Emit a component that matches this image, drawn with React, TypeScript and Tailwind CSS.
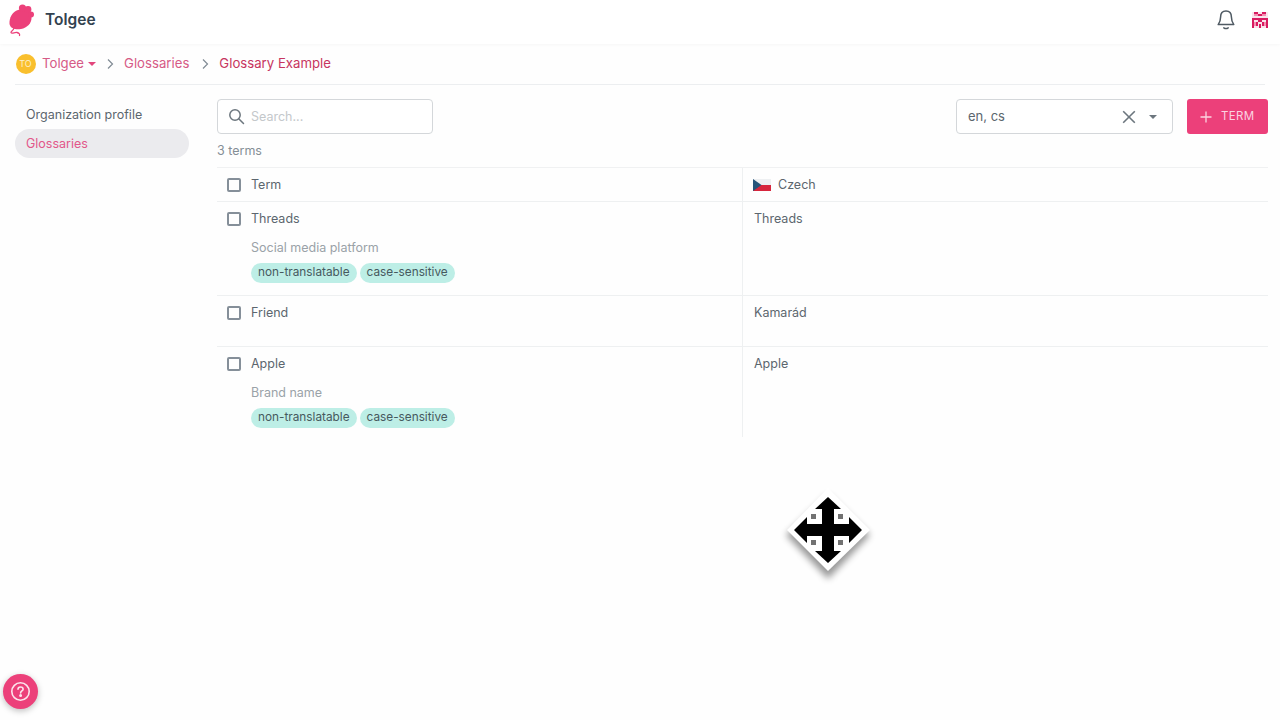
import React from "react";

const ff = "font-['Inter','Liberation_Sans',sans-serif]";

function Mouse() {
  return (
    <svg width="26" height="33" viewBox="9 4 26 33" className="shrink-0">
      <g fill="#ec407a">
        <path d="M9.5 24 C9 18 12.5 11.5 18 10 C24 8.5 31 11 31.5 17 C32 23 27 28 21 29 C16 29.8 10.5 29 9.5 24 Z" />
        <circle cx="22.5" cy="8" r="3.6" />
        <circle cx="28" cy="9.5" r="3.4" />
        <circle cx="31" cy="14.5" r="3" />
      </g>
      <path d="M14 28 C13.5 31 10.5 31 11 32.5 C11.5 34 15 32 17 32.5 C19 33 20 34 19.5 35.5" fill="none" stroke="#ec407a" strokeWidth="1.3" strokeLinecap="round" />
    </svg>
  );
}

function Avatar() {
  return (
    <svg width="16" height="16" viewBox="0 0 8 8" shapeRendering="crispEdges" className="shrink-0">
      <rect width="8" height="8" fill="#f9e4ec" />
      <path fill="#d81b60" d="M1 0h2v1H1zM5 0h2v1H5zM3 1h2v1H3zM0 3h8v1H0zM0 4h1v4H0zM7 4h1v4H7zM3 4h2v1H3zM2 5h1v2H2zM5 5h1v2H5zM3.5 6h1v2h-1z" />
      <path fill="#f48fb1" d="M1 1h2v1H1zM5 1h2v1H5zM1 5h1v2H1zM6 5h1v2H6z" />
    </svg>
  );
}

function Chevron() {
  return (
    <svg width="14" height="14" viewBox="0 0 14 14" fill="none" stroke="#808b94" strokeWidth="1.2" className="shrink-0">
      <path d="M5 2.5 L9.5 7 L5 11.5" />
    </svg>
  );
}

function Caret({ color, w = 8 }: { color: string; w?: number }) {
  return (
    <svg width={w} height={w / 2} viewBox="0 0 8 4" className="shrink-0">
      <path d="M0 0h8L4 4z" fill={color} />
    </svg>
  );
}

function Check() {
  return <div className="h-[14px] w-[14px] shrink-0 rounded-[2px] border-2 border-[#858f99]" />;
}

function Tag({ children }: { children: React.ReactNode }) {
  return (
    <span className="flex h-[20px] items-center rounded-[10px] bg-[#bdeee6] px-[7px] text-[11.8px] text-[#46595e]">
      {children}
    </span>
  );
}

function Row({
  term,
  desc,
  tags,
  trans,
  h,
  border = true,
}: {
  term: string;
  desc?: string;
  tags?: boolean;
  trans: string;
  h: string;
  border?: boolean;
}) {
  return (
    <div className={`flex ${h} ${border ? "border-b border-[#eef0f1]" : ""}`}>
      <div className="w-[526px] shrink-0 border-r border-[#eef0f1] pl-[10px] pt-[9px]">
        <div className="flex h-[16px] items-center gap-[10px]">
          <Check />
          <span className="text-[12.5px] text-[#5c666e]">{term}</span>
        </div>
        {desc && (
          <div className="ml-[24px] mt-[13px] text-[12.5px] leading-[16px] text-[#9aa2a8]">{desc}</div>
        )}
        {tags && (
          <div className="ml-[24px] mt-[7px] flex gap-[3px]">
            <Tag>non-translatable</Tag>
            <Tag>case-sensitive</Tag>
          </div>
        )}
      </div>
      <div className="pl-[11px] pt-[9px] text-[12.5px] leading-[16px] text-[#5c666e]">{trans}</div>
    </div>
  );
}

export default function App() {
  return (
    <div className={`relative h-[720px] w-[1280px] overflow-hidden bg-[#fefefe] ${ff}`}>
      <header className="flex h-[44px] items-center justify-between bg-white pb-[4px] pl-[9px] pr-[12px] shadow-[0_1px_3px_rgba(0,0,0,0.03)]">
        <div className="flex items-center gap-[10px]">
          <Mouse />
          <span className="text-[15.5px] font-semibold text-[#33424f]">Tolgee</span>
        </div>
        <div className="flex items-center gap-[17px]">
          <svg width="20" height="22" viewBox="0 0 20 22" fill="none" stroke="#4f5a63" strokeWidth="1.5" className="translate-x-[1px]">
            <path d="M10 2 C6.4 2 4.6 4.6 4.6 8 C4.6 12 3.6 13.6 2.2 15.6 H17.8 C16.4 13.6 15.4 12 15.4 8 C15.4 4.6 13.6 2 10 2 Z" strokeLinejoin="round" />
            <path d="M7.8 18.8 C9 19.6 11 19.6 12.2 18.8" strokeLinecap="round" />
          </svg>
          <Avatar />
        </div>
      </header>

      <div className="mx-[15px] flex h-[41px] items-center border-b border-[#eceef0] pb-[1px] text-[13.2px]">
        <div className="flex h-[20px] w-[21px] items-center justify-center">
          <div className="flex h-[20px] w-[20px] items-center justify-center rounded-full bg-[#f9bf2d] text-[9px] text-[#fdf0c8]">
            TO
          </div>
        </div>
        <span className="ml-[6px] text-[#d65a86]">Tolgee</span>
        <span className="ml-[4px]">
          <Caret color="#e2457c" />
        </span>
        <span className="ml-[7px]">
          <Chevron />
        </span>
        <span className="ml-[7px] text-[#d65a86]">Glossaries</span>
        <span className="ml-[9px]">
          <Chevron />
        </span>
        <span className="ml-[7px] text-[#c7355f]">Glossary Example</span>
      </div>

      <div className="flex pl-[15px] pr-[12px]">
        <nav className="w-[174px] shrink-0 pt-[14px] text-[12.5px]">
          <div className="flex h-[30px] items-center pl-[11px] pt-[2px] text-[#5c666e]">Organization profile</div>
          <div className="flex h-[29px] items-center rounded-[15px] bg-[#ebebee] pl-[11px] pt-[2px] text-[#e2578a]">Glossaries</div>
        </nav>

        <main className="ml-[28px] flex-1 pt-[14px]">
          <div className="flex items-center justify-between">
            <div className="flex h-[35px] w-[216px] items-center gap-[6px] rounded-[4px] border border-[#d4d7da] bg-white pl-[10px]">
              <svg width="17" height="17" viewBox="0 0 17 17" fill="none" stroke="#6c767e" strokeWidth="1.5">
                <circle cx="7" cy="7" r="5.2" />
                <path d="M11 11 L15.5 15.5" strokeLinecap="round" />
              </svg>
              <span className="pt-[1px] text-[12.5px] text-[#c4c8cb]">Search...</span>
            </div>
            <div className="flex items-center gap-[14px]">
              <div className="flex h-[35px] w-[217px] items-center rounded-[4px] border border-[#d4d7da] bg-white pl-[11px] pr-[15px]">
                <span className="flex-1 pt-[1px] text-[13px] text-[#5c666e]">en, cs</span>
                <svg width="14" height="14" viewBox="0 0 14 14" stroke="#6c767e" strokeWidth="1.6" className="mr-[13px]">
                  <path d="M1.2 1.2 L12.8 12.8 M12.8 1.2 L1.2 12.8" />
                </svg>
                <Caret color="#6c767e" />
              </div>
              <div className="flex h-[35px] w-[81px] items-center rounded-[3px] bg-[#ec407a] pl-[13px] text-white">
                <svg width="12" height="12" viewBox="0 0 12 12" stroke="#fbd3e1" strokeWidth="1.3">
                  <path d="M6 0.5 V11.5 M0.5 6 H11.5" />
                </svg>
                <span className="ml-[9px] pt-[1px] text-[11.5px] font-normal tracking-[0.3px] text-[#fbd3e1]">TERM</span>
              </div>
            </div>
          </div>

          <div className="mt-[9px] h-[24px] text-[12.5px] leading-[16px] text-[#858f96]">3 terms</div>

          <div className="border-t border-[#f0f1f2]">
            <div className="flex h-[34px] border-b border-[#eef0f1]">
              <div className="flex w-[526px] shrink-0 items-center gap-[10px] border-r border-[#eef0f1] pl-[10px]">
                <Check />
                <span className="pt-[2px] text-[12.5px] text-[#5c666e]">Term</span>
              </div>
              <div className="flex items-center gap-[7px] pl-[10px]">
                <svg width="18" height="12" viewBox="0 0 18 12" className="shrink-0">
                  <rect width="18" height="6" fill="#eef0f2" />
                  <rect y="6" width="18" height="6" fill="#d7263d" />
                  <path d="M0 0 L8.5 6 L0 12 Z" fill="#26557a" />
                </svg>
                <span className="pt-[2px] text-[12.5px] text-[#5c666e]">Czech</span>
              </div>
            </div>
            <Row term="Threads" desc="Social media platform" tags trans="Threads" h="h-[94px]" />
            <Row term="Friend" trans="Kamarád" h="h-[51px]" />
            <Row term="Apple" desc="Brand name" tags trans="Apple" h="h-[90px]" border={false} />
          </div>
        </main>
      </div>

      <svg width="100" height="100" viewBox="0 0 100 100" className="absolute left-[778px] top-[486px]">
        <defs>
          <filter id="sh" x="-30%" y="-30%" width="160%" height="160%">
            <feGaussianBlur stdDeviation="3.5" />
          </filter>
          <filter id="soft" x="-10%" y="-10%" width="120%" height="120%">
            <feGaussianBlur stdDeviation="0.5" />
          </filter>
        </defs>
        <path d="M50 6 L92 46 L50 90 L8 46 Z" fill="#000" opacity="0.4" filter="url(#sh)" transform="translate(0 3)" />
        <g filter="url(#soft)">
          <path d="M50 2 L92 44 L50 85 L9 44 Z" fill="#fff" />
          <path
            fill="#000"
            d="M50 11 L63 23 L56 23 L56 38 L71 38 L71 31 L84 44 L71 57 L71 50 L56 50 L56 65 L63 65 L50 77 L37 65 L44 65 L44 50 L29 50 L29 57 L16 44 L29 31 L29 38 L44 38 L44 23 L37 23 Z"
          />
          <g fill="#000" opacity="0.55">
            <rect x="33" y="28" width="5" height="5" />
            <rect x="60" y="28" width="5" height="5" />
            <rect x="33" y="54" width="5" height="5" />
            <rect x="60" y="54" width="5" height="5" />
          </g>
        </g>
      </svg>

      <div className="absolute bottom-[11px] left-[3px] flex h-[35px] w-[35px] items-center justify-center rounded-full bg-[#ec407a] shadow-[0_2px_6px_rgba(0,0,0,0.25)]">
        <svg width="21" height="21" viewBox="0 0 21 21" fill="none" stroke="#fce4ec" strokeWidth="1.6">
          <circle cx="10.5" cy="10.5" r="8.7" />
          <path d="M8 8.3 C8 6.8 9.2 6 10.5 6 C12 6 13.1 7 13.1 8.2 C13.1 10 10.6 10 10.6 12" strokeLinecap="round" />
          <circle cx="10.6" cy="14.6" r="0.7" fill="#fce4ec" />
        </svg>
      </div>
    </div>
  );
}
